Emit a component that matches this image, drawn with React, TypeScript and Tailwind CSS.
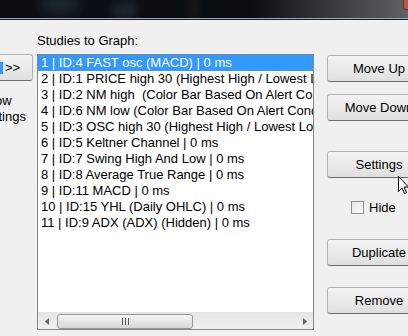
import React from 'react';

const rows = [
  '1 | ID:4 FAST osc (MACD) | 0 ms',
  '2 | ID:1 PRICE high 30 (Highest High / Lowest Low) | 0 ms',
  '3 | ID:2 NM high  (Color Bar Based On Alert Condition) | 0 ms',
  '4 | ID:6 NM low (Color Bar Based On Alert Condition) | 0 ms',
  '5 | ID:3 OSC high 30 (Highest High / Lowest Low) | 0 ms',
  '6 | ID:5 Keltner Channel | 0 ms',
  '7 | ID:7 Swing High And Low | 0 ms',
  '8 | ID:8 Average True Range | 0 ms',
  '9 | ID:11 MACD | 0 ms',
  '10 | ID:15 YHL (Daily OHLC) | 0 ms',
  '11 | ID:9 ADX (ADX) (Hidden) | 0 ms',
];

// win7 style push button
const WinButton = ({ label, className = '' }: { label: string; className?: string }) => (
  <div
    className={`h-[27px] w-[104px] shrink-0 flex items-center justify-center rounded-[3px] border border-[#b4b4b4] border-b-[#707070] bg-gradient-to-b from-[#f4f4f4] via-[#ebebeb] to-[#dedede] text-[13px] text-black ${className}`}
  >
    {label}
  </div>
);

const Cursor = () => (
  <svg width="12" height="19" viewBox="0 0 12 19" className="absolute left-[398px] top-[176px]">
    <path d="M0.5 0.5 L0.5 15.5 L4 12 L6.5 17.5 L8.5 16.5 L6 11 L10.5 11 Z" fill="white" stroke="black" strokeWidth="1" />
  </svg>
);

export default function App() {
  return (
    <div className="relative w-[408px] h-[336px] overflow-hidden bg-[#f0f0f0] font-['Liberation_Sans',Arial,sans-serif] text-[13px] leading-4 text-black">
      {/* Title strip of the window behind */}
      <div className="relative h-[18px] overflow-hidden bg-[linear-gradient(90deg,#0a0e13_0%,#0b0f14_62%,#34383b_80%,#5e6163_100%)]">
        <div className="absolute left-[40px] top-[-6px] h-[20px] w-[40px] rounded-full bg-[#3a4a58] opacity-40 blur-[6px]" />
        <div className="absolute left-[112px] top-[2px] h-[16px] w-[26px] rounded-full bg-[#3d4d5c] opacity-40 blur-[5px]" />
        <div className="absolute left-[190px] top-[-4px] h-[22px] w-[8px] bg-[#2b1e1e] opacity-40 blur-[3px]" />
        <div className="absolute left-[403px] top-[-4px] h-[14px] w-[12px] rounded-[3px] border border-[#7a2a1c] bg-[#c0553e]" />
      </div>
      <div className="h-px bg-[#9ea6ad]" />
      <div className="h-px bg-[#1a1c1e]" />

      <div className="flex">
        {/* left column (cut off) */}
        <div className="w-[33px] shrink-0 overflow-hidden">
          <div className="relative mt-[34px] h-[27px] w-[33px] flex items-center rounded-r-[3px] border border-l-0 border-[#b4b4b4] border-b-[#707070] bg-gradient-to-b from-[#f4f4f4] via-[#ebebeb] to-[#dedede]">
            <div className="absolute left-0 top-[7px] h-[12px] w-[3px] bg-[#3399ff]" />
            <span className="pl-[5px]">&gt;&gt;</span>
          </div>
          <div className="mt-[12px] ml-[-21px] w-[80px]">
            <div>Show</div>
            <div>Settings</div>
          </div>
        </div>

        {/* studies list */}
        <div className="ml-[4px] w-[277px] shrink-0">
          <div className="mt-[13px] h-4">Studies to Graph:</div>
          <div className="mt-[5px] h-[276px] flex flex-col border border-[#828790] bg-white">
            <div className="flex-1 overflow-hidden">
              {rows.map((r, i) => (
                <div
                  key={r}
                  className={`h-4 whitespace-pre pl-[3px] ${i === 0 ? 'bg-[#3399ff] text-white' : ''}`}
                >
                  {r}
                </div>
              ))}
            </div>
            {/* horizontal scrollbar */}
            <div className="h-[17px] flex items-center border-t border-[#e3e3e3] bg-gradient-to-b from-[#e6e6e6] to-[#f0f0f0]">
              <div className="w-[17px] h-full flex items-center justify-center">
                <svg width="4" height="7" viewBox="0 0 4 7">
                  <path d="M4 0 L0 3.5 L4 7 Z" fill="#606060" />
                </svg>
              </div>
              <div className="ml-[2px] h-[15px] w-[136px] flex items-center justify-center rounded-[3px] border border-[#979797] bg-gradient-to-b from-[#f6f6f6] via-[#e6e6e6] to-[#d6d6d6]">
                <div className="flex gap-[2px]">
                  <div className="h-[7px] w-px bg-[#5a5a5a]" />
                  <div className="h-[7px] w-px bg-[#5a5a5a]" />
                  <div className="h-[7px] w-px bg-[#5a5a5a]" />
                </div>
              </div>
              <div className="flex-1" />
              <div className="w-[17px] h-full flex items-center justify-center">
                <svg width="4" height="7" viewBox="0 0 4 7">
                  <path d="M0 0 L4 3.5 L0 7 Z" fill="#606060" />
                </svg>
              </div>
            </div>
          </div>
        </div>

        {/* right buttons */}
        <div className="ml-[13px] flex flex-col">
          <WinButton label="Move Up" className="mt-[35px]" />
          <WinButton label="Move Down" className="mt-[12px]" />
          <WinButton label="Settings" className="mt-[30px]" />
          <div className="mt-[23px] ml-[24px] flex items-center h-[13px]">
            <div className="h-[13px] w-[13px] border border-[#8f8f8f] bg-gradient-to-br from-[#e4e4e4] to-white" />
            <span className="ml-[5px]">Hide</span>
          </div>
          <WinButton label="Duplicate" className="mt-[25px]" />
          <WinButton label="Remove" className="mt-[21px]" />
        </div>
      </div>

      <Cursor />
    </div>
  );
}
